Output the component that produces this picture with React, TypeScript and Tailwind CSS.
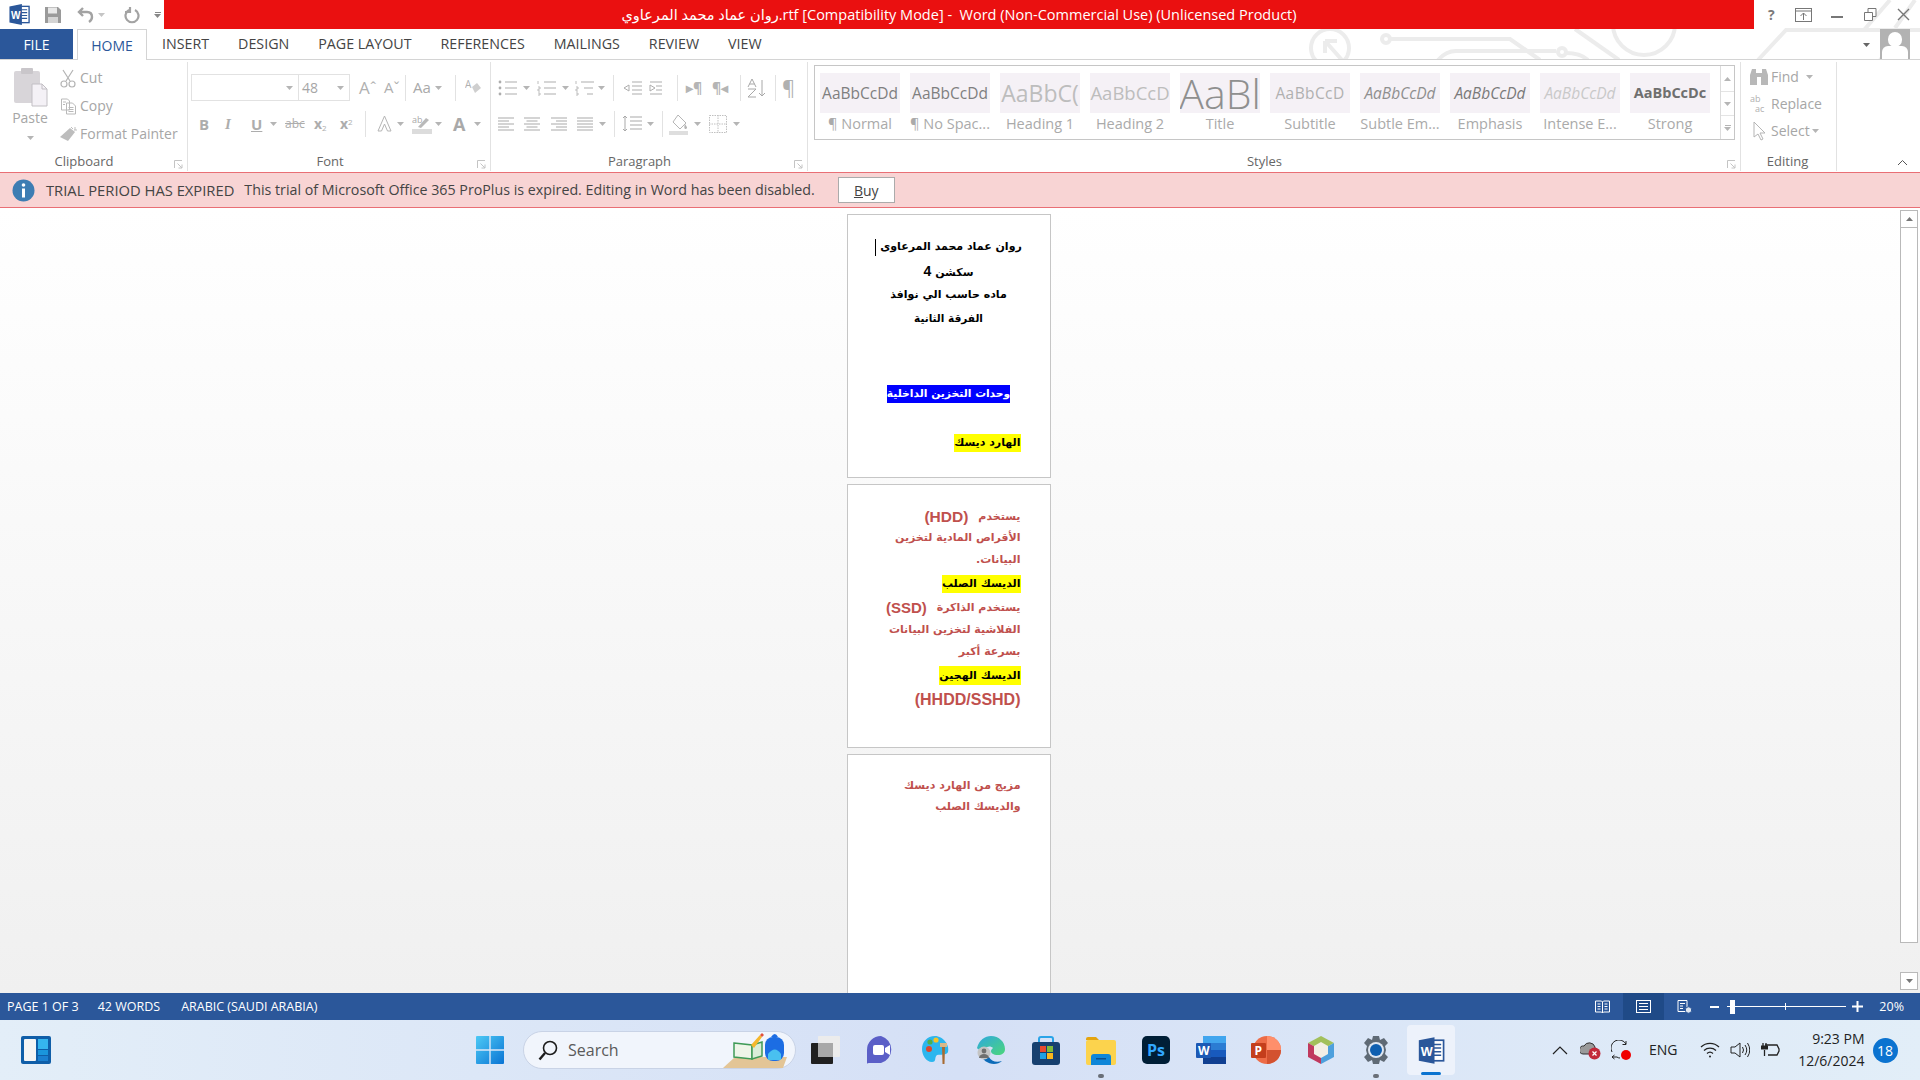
import React from "react";

const UI = "font-['Open_Sans','Noto_Sans',sans-serif]";

function Caret({ c = "#b5b5b5", className = "" }: { c?: string; className?: string }) {
  return (
    <svg width="7" height="4" viewBox="0 0 7 4" className={className}>
      <path d="M0 0h7L3.5 4z" fill={c} />
    </svg>
  );
}

function Sep({ className = "" }: { className?: string }) {
  return <div className={`w-px h-[26px] bg-[#e2e2e2] shrink-0 ${className}`} />;
}

function WordLogo({ size = 24 }: { size?: number }) {
  return (
    <svg width={size} height={size} viewBox="0 0 24 24">
      <rect x="9" y="3.5" width="13" height="17" fill="#fff" stroke="#2b579a" strokeWidth="1.4" />
      <path d="M14 7h6M14 10h6M14 13h6M14 16h6" stroke="#2b579a" strokeWidth="1.2" />
      <path d="M1.5 3.6 14.5 1v22l-13-2.6z" fill="#2b579a" />
      <text x="3.2" y="16.4" fontSize="10.5" fontWeight="700" fill="#fff" fontFamily="Liberation Sans">W</text>
    </svg>
  );
}

function Launcher() {
  return (
    <svg width="9" height="9" viewBox="0 0 9 9" className="absolute right-[4px] bottom-[2px]">
      <path d="M.5 8V.5H8" stroke="#c4c4c4" fill="none" />
      <path d="M3.5 3.5 8 8M8 4.5V8H4.5" stroke="#c4c4c4" fill="none" />
    </svg>
  );
}

function Lines({ w = 18, kind }: { w?: number; kind: "l" | "c" | "r" | "j" }) {
  const rows = [0, 1, 2, 3, 4];
  return (
    <svg width={w} height="14" viewBox="0 0 18 14">
      {rows.map((i) => {
        const short = i % 2 === 1 && kind !== "j" ? 5 : 0;
        const x1 = kind === "r" ? short : kind === "c" ? short / 2 : 0;
        const x2 = kind === "l" ? 16 - short : kind === "c" ? 16 - short / 2 : 16;
        return <path key={i} d={`M${x1} ${1 + i * 3}H${x2}`} stroke="#a9a9a9" />;
      })}
    </svg>
  );
}

function RibbonItem({ icon, label }: { icon: React.ReactNode; label: string }) {
  return (
    <div className="flex items-center h-[28px]">
      <div className="w-[22px] flex justify-center">{icon}</div>
      <span className="ml-[1px] text-[14px] text-[#a6a6a6] leading-none">{label}</span>
    </div>
  );
}

function ClipboardGroup() {
  return (
    <div className="relative w-[188px] h-[109px] border-r border-[#e2e2e2] shrink-0">
      <div className="flex pt-[5px] pl-[11px]">
        <div className="flex flex-col items-center w-[38px]">
          <svg width="35" height="40" viewBox="0 0 35 40">
            <rect x="1" y="4" width="26" height="32" rx="2" fill="#d8d5d9" />
            <rect x="8" y="1" width="12" height="6" rx="1" fill="#c9c6ca" />
            <path d="M19 17h10l5 5v17H19z" fill="#f4f1f6" stroke="#c2bfc4" />
            <path d="M29 17v5h5" fill="none" stroke="#c2bfc4" />
          </svg>
          <span className="text-[14px] text-[#a6a6a6] leading-none mt-[4px]">Paste</span>
          <Caret className="mt-[11px]" />
        </div>
        <div className="ml-[8px] flex flex-col mt-[-3px]">
          <RibbonItem
            label="Cut"
            icon={
              <svg width="16" height="19" viewBox="0 0 16 19" fill="none" stroke="#b4b4b4" strokeWidth="1.2">
                <path d="M3 1l7 11M13 1 6 12" />
                <circle cx="4" cy="15" r="3" />
                <circle cx="12" cy="15" r="3" />
              </svg>
            }
          />
          <RibbonItem
            label="Copy"
            icon={
              <svg width="17" height="17" viewBox="0 0 17 17" fill="none" stroke="#b9b9b9">
                <path d="M1.5 1h6l2 2v9h-8zM6.5 5h6l3 3v8h-9z" fill="#fff" />
                <path d="M3 4h3M3 6.5h2M8.5 9.5h5M8.5 11.5h5M8.5 13.5h5" />
              </svg>
            }
          />
          <RibbonItem
            label="Format Painter"
            icon={
              <svg width="20" height="16" viewBox="0 0 20 16">
                <path d="M12 2l5 4-7 9-8-4z" fill="#bdbdbd" />
                <path d="M13 1l2 2M17 1v3M19 4h-3" stroke="#bdbdbd" fill="none" />
              </svg>
            }
          />
        </div>
      </div>
      <div className="absolute bottom-[2px] left-0 right-0 text-center pr-[19px] text-[13px] leading-[16px] text-[#666]">Clipboard</div>
      <Launcher />
    </div>
  );
}

function FontGroup() {
  return (
    <div className="relative w-[303px] h-[109px] border-r border-[#e2e2e2] shrink-0 pl-[3px]">
      <div className="flex items-center mt-[12px] h-[27px]">
        <div className="w-[108px] h-[27px] border border-[#e2e2e2] flex items-center justify-end pr-[5px]">
          <Caret />
        </div>
        <div className="w-[51px] h-[27px] border border-l-0 border-[#e2e2e2] flex items-center justify-between pl-[3px] pr-[5px]">
          <span className="text-[14px] text-[#a6a6a6]">48</span>
          <Caret />
        </div>
        <span className="ml-[9px] w-[25px] text-[17px] leading-none text-[#b0b0b0]">Aˆ</span>
        <span className="w-[21px] text-[15px] leading-none text-[#b0b0b0]">Aˇ</span>
        <Sep className="mr-[7px]" />
        <span className="text-[15px] text-[#a9a9a9] leading-none">Aa</span>
        <Caret className="ml-[4px] mr-[13px]" />
        <Sep className="mr-[9px]" />
        <svg width="17" height="17" viewBox="0 0 17 17">
          <path d="M7 8l5-4 4 5-6 5z" fill="#cfcfcf" />
          <text x="0" y="9" fontSize="10" fill="#b0b0b0" fontFamily="Open Sans">A</text>
        </svg>
      </div>
      <div className="flex items-center h-[26px] mt-[10px] pl-[8px]">
        <span className="w-[26px] text-[15px] font-bold text-[#adadad] leading-none">B</span>
        <span className="w-[26px] text-[15px] font-bold italic text-[#adadad] leading-none font-['Liberation_Serif']">I</span>
        <span className="w-[16px] text-[15px] font-bold underline text-[#adadad] leading-none">U</span>
        <Caret className="mr-[8px] ml-[3px]" />
        <span className="w-[29px] text-[12px] line-through text-[#adadad] leading-none">abc</span>
        <span className="w-[26px] text-[14px] font-bold text-[#adadad] leading-none">x<sub className="text-[8px] font-normal">2</sub></span>
        <span className="w-[25px] text-[14px] font-bold text-[#adadad] leading-none">x<sup className="text-[8px] font-normal">2</sup></span>
        <Sep className="mr-[10px]" />
        <svg width="17" height="18" viewBox="0 0 17 18">
          <path d="M8.5 1 15 16h-3.5L8.5 9l-3 7H2z" fill="#fff" stroke="#b5b5b5" />
        </svg>
        <Caret className="ml-[4px] mr-[8px]" />
        <svg width="20" height="19" viewBox="0 0 20 19">
          <text x="0" y="8" fontSize="9" fill="#a9a9a9" fontFamily="Open Sans">ab</text>
          <path d="M6 12 14 3l3 2-8 8z" fill="#b9b9b9" />
          <rect y="14" width="20" height="5" fill="#dcdcdc" />
        </svg>
        <Caret className="ml-[3px] mr-[11px]" />
        <span className="w-[18px] text-[18px] font-bold text-[#a9a9a9] leading-none">A</span>
        <Caret className="ml-[3px]" />
      </div>
      <div className="absolute bottom-[2px] left-0 right-0 text-center text-[13px] leading-[16px] text-[#666] pr-[18px]">Font</div>
      <Launcher />
    </div>
  );
}

function ListIcon({ kind }: { kind: "b" | "n" | "m" }) {
  return (
    <svg width="20" height="16" viewBox="0 0 20 16" stroke="#adadad" fill="#adadad">
      {kind === "b" && (
        <>
          <circle cx="2" cy="2" r="1.4" stroke="none" />
          <circle cx="2" cy="8" r="1.4" stroke="none" />
          <circle cx="2" cy="14" r="1.4" stroke="none" />
        </>
      )}
      {kind !== "b" && <path d="M1 1v3M1 7h2v2H1v2h2M1 13h2v2H1" fill="none" strokeWidth="0.8" />}
      <path d={kind === "m" ? "M6 2h13M9 8h9M12 14h6" : "M7 2h12M7 8h12M7 14h12"} />
    </svg>
  );
}

function ParagraphGroup() {
  return (
    <div className="relative w-[317px] h-[109px] shrink-0 border-r border-[#e2e2e2] pl-[7px]">
      <div className="flex items-center h-[27px] mt-[12px]">
        <ListIcon kind="b" />
        <Caret className="ml-[5px] mr-[7px]" />
        <ListIcon kind="n" />
        <Caret className="ml-[5px] mr-[6px]" />
        <ListIcon kind="m" />
        <Caret className="ml-[3px] mr-[8px]" />
        <Sep className="mr-[9px]" />
        <svg width="46" height="14" viewBox="0 0 44 14" fill="none" stroke="#adadad" className="mr-[8px]">
          <path d="M8 1h10M8 5h10M8 9h10M8 13h10M0 7l5-3v6zM26 1h12M32 5h6M32 9h6M26 13h12M31 7l-5-3v6z" />
        </svg>
        <Sep className="mr-[8px]" />
        <span className="w-[26px] text-[14px] font-bold text-[#b5b5b5] leading-none">▸¶</span>
        <span className="w-[28px] text-[14px] font-bold text-[#b5b5b5] leading-none">¶◂</span>
        <Sep className="mr-[6px]" />
        <svg width="20" height="20" viewBox="0 0 20 20" fill="none" stroke="#a8a8a8" className="mr-[8px]">
          <path d="M1 9 5 1l4 8M2.500 6h5M1 11h8L1 19h8M15 2v16M12 15l3 3 3-3" />
        </svg>
        <Sep className="mr-[6px]" />
        <span className="text-[20px] text-[#b0b0b0] leading-none">¶</span>
      </div>
      <div className="flex items-center h-[26px] mt-[10px]">
        <Lines kind="l" />
        <div className="w-[8px]" />
        <Lines kind="c" />
        <div className="w-[9px]" />
        <Lines kind="r" />
        <div className="w-[8px]" />
        <Lines kind="j" />
        <Caret className="ml-[4px] mr-[8px]" />
        <Sep className="mr-[7px]" />
        <svg width="20" height="18" viewBox="0 0 20 18" fill="none" stroke="#a9a9a9">
          <path d="M8 2h12M8 6h12M8 10h12M8 14h12M3 1v15M1 3l2-2 2 2M1 14l2 2 2-2" />
        </svg>
        <Caret className="ml-[5px] mr-[8px]" />
        <Sep className="mr-[6px]" />
        <svg width="20" height="21" viewBox="0 0 20 21">
          <path d="M9 1l8 8-6 6-7-7z" fill="#fff" stroke="#b5b5b5" />
          <path d="M16 10c2 3 3 4 1 5-2 0-2-2-1-5z" fill="#b5b5b5" />
          <rect y="17" width="19" height="4" fill="#dedede" />
        </svg>
        <Caret className="ml-[5px] mr-[8px]" />
        <svg width="18" height="18" viewBox="0 0 18 18" fill="none" stroke="#c0c0c0" strokeDasharray="1.5 1">
          <rect x=".5" y=".5" width="17" height="17" />
          <path d="M9 0v18M0 9h18" />
        </svg>
        <Caret className="ml-[6px]" />
      </div>
      <div className="absolute bottom-[2px] left-0 right-0 text-center text-[13px] leading-[16px] text-[#666] pr-[19px]">Paragraph</div>
      <Launcher />
    </div>
  );
}

const STYLES = [
  { s: "text-[15.5px] text-[#7f7f7f]", t: "AaBbCcDd", l: "¶ Normal" },
  { s: "text-[15.5px] text-[#7f7f7f]", t: "AaBbCcDd", l: "¶ No Spac..." },
  { s: "text-[23px] text-[#bdbdbd]", t: "AaBbC(", l: "Heading 1" },
  { s: "text-[18.5px] text-[#bdbdbd]", t: "AaBbCcD", l: "Heading 2" },
  { s: "text-[41px] text-[#8f8f8f] font-light", t: "AaBl", l: "Title" },
  { s: "text-[15.5px] text-[#b0b0b0] tracking-[0.4px]", t: "AaBbCcD", l: "Subtitle" },
  { s: "text-[15.5px] text-[#8f8f8f] italic", t: "AaBbCcDd", l: "Subtle Em..." },
  { s: "text-[15.5px] text-[#7a7a7a] italic", t: "AaBbCcDd", l: "Emphasis" },
  { s: "text-[15.5px] text-[#c9c9c9] italic", t: "AaBbCcDd", l: "Intense E..." },
  { s: "text-[14.5px] text-[#6f6f6f] font-bold", t: "AaBbCcDc", l: "Strong" },
];

function StylesGroup() {
  return (
    <div className="relative w-[933px] h-[109px] shrink-0 border-r border-[#e2e2e2] pl-[6px]">
      <div className="w-[921px] h-[75px] mt-[3px] border border-[#c6c6c6] flex">
        <div className="flex-1 flex pl-[5px] pt-[7px]">
          {STYLES.map((t) => (
            <div key={t.l} className="w-[80px] mr-[10px] flex flex-col items-center">
              <div className="w-[80px] h-[40px] bg-[#f5f1f6] flex items-center justify-center overflow-hidden whitespace-nowrap pt-[1px]">
                <span className={`${t.s} leading-none`}>{t.t}</span>
              </div>
              <span className="text-[14.5px] text-[#aaa] leading-none mt-[4px] whitespace-nowrap">{t.l}</span>
            </div>
          ))}
        </div>
        <div className="w-[16px] border-l border-[#dcdcdc] flex flex-col">
          <div className="h-[26px] flex items-center justify-center border-b border-[#e4e4e4]"><Caret className="rotate-180" /></div>
          <div className="h-[24px] flex items-center justify-center border-b border-[#e4e4e4]"><Caret /></div>
          <div className="flex-1 flex flex-col gap-[1px] items-center justify-center"><div className="w-[6px] h-px bg-[#b5b5b5]" /><Caret /></div>
        </div>
      </div>
      <div className="absolute bottom-[2px] left-0 right-0 text-center text-[13px] leading-[16px] text-[#666] pr-[19px]">Styles</div>
      <Launcher />
    </div>
  );
}

function EditingGroup() {
  return (
    <div className="relative w-[96px] h-[109px] shrink-0 border-r border-[#e2e2e2] pl-[8px] pt-[1px]">
      <div className="flex items-center h-[27px]">
        <svg width="20" height="20" viewBox="0 0 20 20" fill="#b8b8b8">
          <path d="M1 8 3 2h4v4h6V2h4l2 6v10h-7V10H8v8H1z" />
        </svg>
        <span className="ml-[2px] text-[14px] text-[#a6a6a6] leading-none">Find</span>
        <Caret className="ml-[7px]" />
      </div>
      <div className="flex items-center h-[27px]">
        <svg width="20" height="20" viewBox="0 0 20 20">
          <text x="1" y="8" fontSize="9" fill="#b0b0b0" fontFamily="Open Sans">ab</text>
          <text x="6" y="18" fontSize="9" fill="#b0b0b0" fontFamily="Open Sans">ac</text>
        </svg>
        <span className="ml-[2px] text-[14px] text-[#a6a6a6] leading-none">Replace</span>
      </div>
      <div className="flex items-center h-[27px]">
        <svg width="20" height="20" viewBox="0 0 20 20" fill="#fff" stroke="#b5b5b5">
          <path d="M5 1v15l4-3 3 6 2-1-3-6h5z" />
        </svg>
        <span className="ml-[2px] text-[14px] text-[#a6a6a6] leading-none">Select</span>
        <Caret className="ml-[2px]" />
      </div>
      <div className="absolute bottom-[2px] left-0 right-0 text-center text-[13px] leading-[16px] text-[#666] pr-[2px]">Editing</div>
    </div>
  );
}

function Decoration() {
  return (
    <svg className="absolute left-[1300px] top-0" width="620" height="60" viewBox="1300 0 620 60" fill="none" stroke="#ececec" strokeWidth="4">
      <circle cx="1330" cy="48" r="19" />
      <path d="M1325 41h12M1325 41v12M1326 42l16 18" />
      <circle cx="1386" cy="39" r="4" />
      <path d="M1391 39h119l30 21" />
      <path d="M1438 60q8-9 18-9h100" />
      <circle cx="1562" cy="52" r="4" />
      <path d="M1566 53q14 0 22 7M1575 29l44 31" />
      <circle cx="1644" cy="24" r="31" />
      <path d="M1758 60l28-30h134M1890 0l-26 30M1880 60l26-30M1915 0l-20 28" />
    </svg>
  );
}

function TitleBar() {
  return (
    <div className="flex h-[29px] relative">
      <div className="w-[164px] flex items-center shrink-0">
        <div className="ml-[8px]"><WordLogo size={23} /></div>
        <svg width="18" height="18" viewBox="0 0 18 18" className="ml-[13px]">
          <path d="M1 1h13l3 3v13H1z" fill="#9a9a9a" />
          <rect x="4" y="1.5" width="9" height="6" fill="#e8e8e8" />
          <rect x="4" y="11" width="10" height="6" fill="#d4d4d4" />
        </svg>
        <svg width="18" height="16" viewBox="0 0 18 16" fill="none" stroke="#a3a3a3" strokeWidth="2.4" className="ml-[15px]">
          <path d="M6 1 2 5l4 4M2 5h8q5 0 5 5 0 3-3 5" />
        </svg>
        <Caret c="#c5c5c5" className="ml-[3px]" />
        <svg width="16" height="18" viewBox="0 0 16 18" fill="none" stroke="#a3a3a3" strokeWidth="2.2" className="ml-[19px]">
          <path d="M5 4a6.5 6.5 0 1 0 6 0M6 1v5H1" />
        </svg>
        <div className="ml-[14px] flex flex-col items-center gap-[1px]"><div className="w-[6px] h-px bg-[#888]" /><Caret c="#888" /></div>
      </div>
      <div className="w-[1590px] bg-[#ea1010] flex items-center justify-center text-white text-[14.5px] whitespace-pre shrink-0">
        <span className="font-['Open_Sans','DejaVu_Sans',sans-serif]">روان عماد محمد المرعاوي.rtf [Compatibility Mode] -  Word (Non-Commercial Use) (Unlicensed Product)</span>
      </div>
      <div className="flex-1 flex items-center relative">
        <span className="ml-[14px] text-[14px] font-bold text-[#7a7a7a] w-[27px] leading-none">?</span>
        <svg width="17" height="14" viewBox="0 0 17 14" fill="none" stroke="#777">
          <rect x=".5" y=".5" width="16" height="13" />
          <path d="M1 3h15M8.500 12V5M5.500 8l3-3 3 3" />
        </svg>
        <div className="ml-[19px] w-[12px] h-[2px] bg-[#777] mt-[4px]" />
        <svg width="13" height="13" viewBox="0 0 13 13" fill="#fff" stroke="#777" className="ml-[21px]">
          <path d="M4 .5h8v8H4z" />
          <path d="M.5 4.5h8v8h-8z" />
        </svg>
        <svg width="13" height="13" viewBox="0 0 13 13" stroke="#777" strokeWidth="1.4" className="ml-[20px]">
          <path d="M1 1l11 11M12 1 1 12" />
        </svg>
      </div>
    </div>
  );
}

const TABS = [
  ["INSERT", "ml-[15px]"],
  ["DESIGN", "ml-[29px]"],
  ["PAGE LAYOUT", "ml-[29px]"],
  ["REFERENCES", "ml-[29px]"],
  ["MAILINGS", "ml-[29px]"],
  ["REVIEW", "ml-[29px]"],
  ["VIEW", "ml-[29px]"],
];

function TabRow() {
  return (
    <div className="flex h-[31px] border-b border-[#d4d4d4] relative">
      <div className="w-[73px] bg-[#2b579a] text-white text-[14px] flex items-center justify-center">FILE</div>
      <div className="ml-[4px] w-[70px] h-[31px] bg-white border border-b-0 border-[#d4d4d4] text-[#2b579a] text-[14px] flex items-center justify-center">HOME</div>
      {TABS.map(([t, m]) => (
        <div key={t} className={`${m} text-[14.25px] text-[#444] flex items-center leading-none`}>{t}</div>
      ))}
      <div className="flex-1 flex justify-end items-center pr-[10px]">
        <Caret c="#666" className="mr-[10px] mt-[2px]" />
        <div className="w-[30px] h-[30px] bg-[#b2b2b2] overflow-hidden flex flex-col items-center">
          <div className="w-[14px] h-[17px] rounded-full bg-white mt-[3px]" />
          <div className="w-[26px] h-[14px] bg-white rounded-t-[6px] -mt-[1px]" />
        </div>
      </div>
    </div>
  );
}

function MessageBar() {
  return (
    <div className="h-[36px] bg-[#f8d4d4] border-y border-[#e96f75] flex items-center">
      <svg width="23" height="23" viewBox="0 0 23 23" className="ml-[12px]">
        <circle cx="11.500" cy="11.500" r="11" fill="#3d7db3" />
        <circle cx="11.500" cy="6" r="1.800" fill="#fff" />
        <rect x="10" y="9.500" width="3" height="9" fill="#fff" />
      </svg>
      <span className="ml-[11px] text-[14.75px] text-[#444] whitespace-nowrap">TRIAL PERIOD HAS EXPIRED</span>
      <span className="ml-[10px] text-[14.25px] text-[#444] whitespace-nowrap">This trial of Microsoft Office 365 ProPlus is expired. Editing in Word has been disabled.</span>
      <div className="ml-[23px] w-[57px] h-[26px] bg-white border border-[#ababab] flex items-center justify-center text-[14px] text-[#444]">
        <span><u>B</u>uy</span>
      </div>
    </div>
  );
}

const AR = "font-['DejaVu_Sans','Liberation_Sans',sans-serif]";

function Page({ className = "", children }: { className?: string; children: React.ReactNode }) {
  return (
    <div className={`w-[204px] bg-white border border-[#c6c6c6] shrink-0 pr-[29px] pl-[29px] ${AR} ${className}`} dir="rtl">
      {children}
    </div>
  );
}

const RED = "text-[#c0504d]";
const LAT = "font-['Liberation_Sans']";

function Document() {
  return (
    <div className="flex h-[785px] bg-gradient-to-b from-white to-[#f0f0f0] overflow-hidden">
      <div className="flex-1 flex flex-col items-center pt-[6px] gap-[6px] overflow-hidden">
        <Page className="h-[264px] pt-[20px] font-bold text-[#000]">
          <div className="h-[24px] flex items-center justify-center text-[11px] whitespace-nowrap">
            <span>روان عماد محمد المرعاوى</span>
            <span className="inline-block w-px h-[17px] bg-black mr-[4px] shrink-0" />
          </div>
          <div className="h-[24px] flex items-center justify-center text-[11px]"><span>سكشن <span className={`text-[14px] ${LAT}`}>4</span></span></div>
          <div className="h-[24px] flex items-center justify-center text-[11px] whitespace-nowrap">ماده حاسب الي نوافذ</div>
          <div className="h-[24px] flex items-center justify-center text-[10.5px] whitespace-nowrap">الفرقة الثانية</div>
          <div className="h-[51px]" />
          <div className="h-[24px] flex items-center justify-center">
            <span className="bg-[#0000ff] text-white text-[10.75px] leading-[18px] whitespace-nowrap">وحدات التخزين الداخلية</span>
          </div>
          <div className="h-[25px]" />
          <div className="h-[24px] flex items-center justify-start">
            <span className="bg-[#ffff00] text-[11px] leading-[18px] whitespace-nowrap">الهارد ديسك</span>
          </div>
        </Page>
        <Page className={`h-[264px] pt-[21px] font-bold ${RED} text-[11px]`}>
          <div className="h-[22px] flex items-center whitespace-nowrap">
            يستخدم<span className={`text-[15.5px] ${LAT} mr-[10px]`}>(HDD)</span>
          </div>
          <div className="h-[21px] flex items-center whitespace-nowrap">الأقراص المادية لتخزين</div>
          <div className="h-[22px] flex items-center whitespace-nowrap">البيانات.</div>
          <div className="h-[25px] flex items-center">
            <span className="bg-[#ffff00] text-black leading-[18px] whitespace-nowrap">الديسك الصلب</span>
          </div>
          <div className="h-[24px] flex items-center whitespace-nowrap">
            يستخدم الذاكرة<span className={`text-[15px] ${LAT} mr-[10px]`}>(SSD)</span>
          </div>
          <div className="h-[21px] flex items-center whitespace-nowrap">الفلاشية لتخزين البيانات</div>
          <div className="h-[22px] flex items-center whitespace-nowrap">بسرعة أكبر</div>
          <div className="h-[24px] flex items-center">
            <span className="bg-[#ffff00] text-black leading-[19px] whitespace-nowrap">الديسك الهجين</span>
          </div>
          <div className={`h-[25px] flex items-center text-[16px] ${LAT} whitespace-nowrap`} dir="ltr">
            <div className="flex-1 text-right">(HHDD/SSHD)</div>
          </div>
        </Page>
        <Page className={`h-[264px] pt-[21px] font-bold ${RED} text-[11px]`}>
          <div className="h-[21px] flex items-center whitespace-nowrap">مزيج من الهارد ديسك</div>
          <div className="h-[21px] flex items-center whitespace-nowrap">والديسك الصلب</div>
        </Page>
      </div>
      <div className="w-[23px] shrink-0 pr-[2px] pl-[3px] flex flex-col pt-[2px]">
        <div className="h-[18px] bg-white border border-[#b9b9b9] flex items-center justify-center"><Caret c="#777" className="rotate-180" /></div>
        <div className="h-[715px] bg-white border border-t-0 border-[#b9b9b9]" />
        <div className="flex-1" />
        <div className="h-[18px] bg-white border border-[#b9b9b9] flex items-center justify-center mb-[3px]"><Caret c="#777" /></div>
      </div>
    </div>
  );
}

function StatusBar() {
  return (
    <div className="h-[27px] bg-[#2b579a] flex items-center text-white text-[12.5px] leading-none">
      <span className="ml-[7px] mt-[2px]">PAGE 1 OF 3</span>
      <span className="ml-[19px] mt-[2px]">42 WORDS</span>
      <span className="ml-[21px] mt-[2px]">ARABIC (SAUDI ARABIA)</span>
      <div className="flex-1" />
      <svg width="15" height="14" viewBox="0 0 15 14" fill="none" stroke="#fff" className="mr-[13px]">
        <path d="M.5 1h6l1 1 1-1h6v11h-6l-1 1-1-1h-6zM2.500 4h3M2.500 6.500h3M2.500 9h3M9.500 4h3M9.500 6.500h3M9.500 9h3M7.500 2v11" />
      </svg>
      <div className="w-[41px] h-[27px] bg-[#1f4a87] flex items-center justify-center">
        <svg width="15" height="13" viewBox="0 0 15 13" fill="none" stroke="#fff">
          <rect x=".5" y=".5" width="14" height="12" />
          <path d="M3 3.500h9M3 6.500h9M3 9.500h9" />
        </svg>
      </div>
      <svg width="15" height="14" viewBox="0 0 15 14" fill="none" stroke="#fff" className="ml-[13px]">
        <path d="M1 .5h9v11H1zM3 3.500h5M3 6h3M3 8.500h3" />
        <circle cx="11.500" cy="10" r="3.200" fill="#dfe6f0" stroke="#2b579a" />
      </svg>
      <div className="ml-[18px] w-[9px] h-[2px] bg-white" />
      <div className="ml-[8px] w-[119px] h-[14px] relative flex items-center">
        <div className="w-full h-px bg-white" />
        <div className="absolute left-[3px] top-0 w-[5px] h-[14px] bg-white" />
        <div className="absolute left-[58px] top-[3px] w-px h-[7px] bg-white" />
      </div>
      <svg width="11" height="11" viewBox="0 0 11 11" className="ml-[6px]">
        <path d="M4.500 0h2v4.500H11v2H6.500V11h-2V6.500H0v-2h4.500z" fill="#fff" />
      </svg>
      <span className="ml-[16px] mr-[16px] text-[12.5px] mt-[2px]">20%</span>
    </div>
  );
}

function Widgets() {
  return (
    <svg width="30" height="28" viewBox="0 0 30 28">
      <rect width="30" height="28" rx="2" fill="#0f5ea8" />
      <rect x="3" y="3" width="12" height="22" rx="1" fill="#f4f4f4" />
      <rect x="17" y="3" width="10" height="10" fill="#35b5ee" />
      <rect x="17" y="14" width="10" height="5" fill="#1a95dc" />
      <rect x="17" y="20" width="10" height="5" fill="#1a7fd0" />
    </svg>
  );
}

function Start() {
  return (
    <svg width="30" height="30" viewBox="0 0 30 30">
      <defs>
        <linearGradient id="st" x1="0" y1="0" x2="1" y2="1">
          <stop offset="0" stopColor="#4cc9f5" />
          <stop offset="1" stopColor="#0a74d4" />
        </linearGradient>
      </defs>
      <path d="M1 2q0-1 1-1h12.300v13.300H1zM15.700 1H28q1 0 1 1v12.300H15.700zM1 15.700h13.300V29H2q-1 0-1-1zM15.700 15.700H29V28q0 1-1 1H15.700z" fill="url(#st)" />
    </svg>
  );
}

const TB_ICONS: React.ReactNode[] = [
  <svg key="tv" width="32" height="30" viewBox="0 0 32 30">
    <rect x="1" y="8" width="22" height="21" rx="1" fill="#202020" />
    <rect x="8" y="1" width="22" height="21" rx="1" fill="#ececec" />
    <rect x="8" y="8" width="15" height="14" fill="#a8a8a8" />
  </svg>,
  <svg key="tm" width="30" height="30" viewBox="0 0 30 30">
    <path d="M15 1a14 14 0 0 1 0 27H3q-2 0-2 1V15A14 14 0 0 1 15 1z" fill="#5b5fc7" />
    <rect x="7" y="10" width="11" height="10" rx="2" fill="#fff" />
    <path d="M19 13l5-3v10l-5-3z" fill="#fff" />
  </svg>,
  <svg key="pt" width="30" height="30" viewBox="0 0 30 30">
    <path d="M14 1C6 1 1 7 1 14c0 6 4 13 10 13 5 0 2-5 5-7 3-1 9 1 11-3 2-7-5-16-13-16z" fill="#2cb6ee" />
    <circle cx="8" cy="14" r="3" fill="#d9472f" />
    <circle cx="9" cy="7" r="2.600" fill="#4caf50" />
    <circle cx="15" cy="5" r="2.600" fill="#f7c325" />
    <path d="M21 11h3l-.5 18h-2z" fill="#a86b32" />
    <rect x="19" y="8" width="7" height="4" fill="#d8b98a" />
  </svg>,
  <svg key="ed" width="30" height="30" viewBox="0 0 30 30">
    <defs>
      <linearGradient id="eg" x1="0" y1="0" x2="1" y2="1">
        <stop offset="0" stopColor="#2ea8e0" />
        <stop offset="1" stopColor="#4cd67a" />
      </linearGradient>
    </defs>
    <path d="M1 13C3 5 9 1 15 1c8 0 14 6 14 13 0 4-3 6-7 6-5 0-7-2-7-4 0-1 1-2 2-3-2-2-5-2-8 0-3 1-6 3-8 0z" fill="url(#eg)" />
    <path d="M4 18c2 7 8 11 14 11 3 0 6-1 8-3-6 2-11 0-13-4z" fill="#0c6bb8" />
    <circle cx="8" cy="18" r="6.500" fill="#c4c4c4" />
    <circle cx="8" cy="16" r="2.400" fill="#6f6f6f" />
    <path d="M3 23a5 4 0 0 1 10 0z" fill="#6f6f6f" />
  </svg>,
  <svg key="st" width="30" height="30" viewBox="0 0 30 30">
    <path d="M8 8V4q0-2 2-2h10q2 0 2 2v4" fill="none" stroke="#2aa4e8" strokeWidth="2" />
    <rect x="1" y="7" width="28" height="23" rx="3" fill="#17406f" />
    <rect x="9" y="11" width="6" height="6" fill="#e8492e" />
    <rect x="16" y="11" width="6" height="6" fill="#7fba3a" />
    <rect x="9" y="18" width="6" height="6" fill="#1fa0e4" />
    <rect x="16" y="18" width="6" height="6" fill="#fbb71c" />
  </svg>,
  <svg key="fl" width="30" height="30" viewBox="0 0 30 30">
    <path d="M0 4q0-2 2-2h8l3 3h-13z" fill="#e4a40f" />
    <rect y="5" width="30" height="25" rx="2" fill="#fcd34d" />
    <path d="M5 30v-8q0-3 3-3h14q3 0 3 3v8z" fill="#0f86d8" />
    <rect x="10" y="23" width="10" height="1.500" fill="#0b4f8e" />
  </svg>,
  <svg key="ps" width="28" height="28" viewBox="0 0 28 28">
    <rect width="28" height="28" rx="5" fill="#001e36" />
    <text x="5" y="20" fontSize="16" fontWeight="700" fill="#31a8ff" fontFamily="Open Sans">Ps</text>
  </svg>,
  <svg key="wd" width="30" height="30" viewBox="0 0 30 30">
    <rect x="7" y="1" width="23" height="7" fill="#41a5ee" />
    <rect x="7" y="8" width="23" height="7" fill="#2b7cd3" />
    <rect x="7" y="15" width="23" height="7" fill="#185abd" />
    <rect x="7" y="22" width="23" height="7" fill="#103f91" />
    <rect y="8" width="15" height="15" rx="1" fill="#1c59b5" />
    <text x="2" y="20" fontSize="12" fontWeight="700" fill="#fff" fontFamily="Open Sans">W</text>
  </svg>,
  <svg key="pp" width="30" height="30" viewBox="0 0 30 30">
    <circle cx="16" cy="15" r="14" fill="#ed6c47" />
    <path d="M16 1a14 14 0 0 1 14 14H16z" fill="#ff8f6b" />
    <path d="M16 15h14a14 14 0 0 1-14 14z" fill="#d35230" />
    <rect y="8" width="15" height="15" rx="1" fill="#c43e1c" />
    <text x="3.500" y="20" fontSize="12" fontWeight="700" fill="#fff" fontFamily="Open Sans">P</text>
  </svg>,
  <svg key="jb" width="28" height="30" viewBox="0 0 28 30">
    <path d="M14 1 27 8 14 15 1 8z" fill="#a2c05c" />
    <path d="M1 8v14l13 7V15z" fill="#c0395e" />
    <path d="M27 8v14L14 29V15z" fill="#4ea0dd" />
    <path d="M14 7l7 4v8l-7 4-7-4v-8z" fill="#f3efe6" />
  </svg>,
  <svg key="gr" width="30" height="30" viewBox="0 0 30 30">
    <path d="M12 1h6l1 4 4-2 4 5-3 3 1 4-1 4 3 3-4 5-4-2-1 4h-6l-1-4-4 2-4-5 3-3-1-4 1-4-3-3 4-5 4 2z" fill="#5f6a75" />
    <circle cx="15" cy="15" r="8" fill="#dfe7f2" />
    <circle cx="15" cy="15" r="6" fill="#0f5fb0" />
  </svg>,
];

function Tray() {
  return (
    <div className="flex items-center h-full">
      <svg width="16" height="9" viewBox="0 0 16 9" fill="none" stroke="#222" strokeWidth="1.2" className="ml-[97px]">
        <path d="M1 8l7-7 7 7" />
      </svg>
      <svg width="21" height="20" viewBox="0 0 21 20" className="ml-[12px]">
        <path d="M3 14a4 4 0 0 1 1-8 6 6 0 0 1 11 1v7z" fill="#9a9a9a" stroke="#333" />
        <circle cx="14.500" cy="13.500" r="6" fill="#c2293a" />
        <path d="M12.500 11.500l4 4M16.500 11.500l-4 4" stroke="#fff" strokeWidth="1.200" />
      </svg>
      <svg width="21" height="21" viewBox="0 0 21 21" className="ml-[10px]" fill="none" stroke="#222">
        <path d="M1 12A8 8 0 0 1 15 4M15 1v3.500h-3.500M1 17h5M1 17l2.500-2M1 17l2.500 2M6 17q1 1 3 1" />
        <circle cx="15" cy="15" r="5" fill="#f00000" stroke="none" />
      </svg>
      <span className="ml-[17px] text-[14px] text-[#222] leading-none">ENG</span>
      <svg width="20" height="16" viewBox="0 0 20 16" fill="none" stroke="#222" strokeWidth="1.300" className="ml-[22px]">
        <path d="M1 5a13 13 0 0 1 18 0M4 8.500a9 9 0 0 1 12 0M7 11.500a4.500 4.500 0 0 1 6 0" />
        <circle cx="10" cy="14.500" r="1" fill="#222" stroke="none" />
      </svg>
      <svg width="20" height="18" viewBox="0 0 20 18" fill="none" stroke="#222" className="ml-[10px]">
        <path d="M1 6h4l5-4v14l-5-4H1zM12.500 6q2 3 0 6M15 4q3.500 5 0 10M17.500 2q4.500 7 0 14" />
      </svg>
      <svg width="20" height="16" viewBox="0 0 20 16" fill="none" stroke="#222" className="ml-[10px]">
        <path d="M5 3H17l2 4v2l-2 4H8M1 5h7M3 1v4M6 1v4M4.500 8v6" strokeWidth="1.300" />
        <rect x="1.500" y="4" width="6" height="3" fill="#222" />
      </svg>
      <div className="w-[85px] flex flex-col items-end text-[14px] leading-[22px] text-[#222] font-['Open_Sans']">
        <span>9:23 PM</span>
        <span>12/6/2024</span>
      </div>
      <div className="ml-[8px] w-[25px] h-[25px] rounded-full bg-[#0b73d0] text-white text-[14px] flex items-center justify-center shrink-0">18</div>
    </div>
  );
}

function Taskbar() {
  return (
    <div className={`h-[60px] flex items-center bg-gradient-to-r from-[#e3eef8] via-[#d5e0f6] to-[#e2eef8]`}>
      <div className="ml-[21px]"><Widgets /></div>
      <div className="ml-[424px]"><Start /></div>
      <div className="ml-[18px] w-[273px] h-[38px] rounded-full bg-[#f1f5fc] border border-[#c9d3e6] flex items-center relative shrink-0">
        <svg width="20" height="21" viewBox="0 0 20 21" fill="none" stroke="#1c1c1c" strokeWidth="1.600" className="ml-[14px]">
          <circle cx="12" cy="8" r="6.500" />
          <path d="M7 13l-5.500 6.500" strokeWidth="2.400" />
        </svg>
        <span className="ml-[10px] text-[16px] text-[#5a5a5a] leading-none">Search</span>
        <svg width="66" height="36" viewBox="0 0 66 36" className="absolute right-[6px] bottom-0">
          <path d="M0 36 12 25h52l-4 11z" fill="#e3c596" />
          <path d="M11 11l18 2v14l-18-2z" fill="#eef5e8" stroke="#3f9b57" strokeWidth="1.500" />
          <path d="M29 13l10-3v14l-10 3z" fill="#d9edd8" stroke="#3f9b57" strokeWidth="1.500" />
          <path d="M28 13 37 3l2 2-8 11z" fill="#f5b82e" />
          <path d="M37 3l2 2 2-2-2-2z" fill="#e0503c" />
          <rect x="42" y="5" width="19" height="24" rx="8" fill="#1c6de3" />
          <path d="M48 5q4-6 7 0z" fill="#1c6de3" />
          <path d="M45 22q7-9 13 0v6H45z" fill="#49c0f0" />
        </svg>
      </div>
      <div className="ml-[2px] flex">
        {TB_ICONS.map((ic, i) => (
          <div key={i} className="w-[55px] h-[60px] flex flex-col items-center justify-center relative shrink-0">
            {ic}
            {(i === 5 || i === 10) && <div className="absolute bottom-[2px] w-[6px] h-[4px] rounded-full bg-[#6a6f78]" />}
          </div>
        ))}
        <div className="w-[48px] ml-[4px] h-[50px] self-center rounded-[4px] bg-[#edf2fb] flex items-center justify-center relative shrink-0">
          <WordLogo size={29} />
          <div className="absolute bottom-0 w-[20px] h-[3px] rounded bg-[#0b73d0]" />
        </div>
      </div>
      <Tray />
    </div>
  );
}

export default function App() {
  return (
    <div className={`w-[1920px] h-[1080px] bg-white overflow-hidden flex flex-col relative ${UI}`}>
      <Decoration />
      <TitleBar />
      <TabRow />
      <div className="flex h-[112px] bg-white relative pt-[2px]">
        <ClipboardGroup />
        <FontGroup />
        <ParagraphGroup />
        <StylesGroup />
        <EditingGroup />
        <svg width="11" height="7" viewBox="0 0 11 7" fill="none" stroke="#555" className="absolute right-[12px] bottom-[6px]">
          <path d="M1 6l4.500-4.500L10 6" />
        </svg>
      </div>
      <MessageBar />
      <Document />
      <StatusBar />
      <Taskbar />
    </div>
  );
}
